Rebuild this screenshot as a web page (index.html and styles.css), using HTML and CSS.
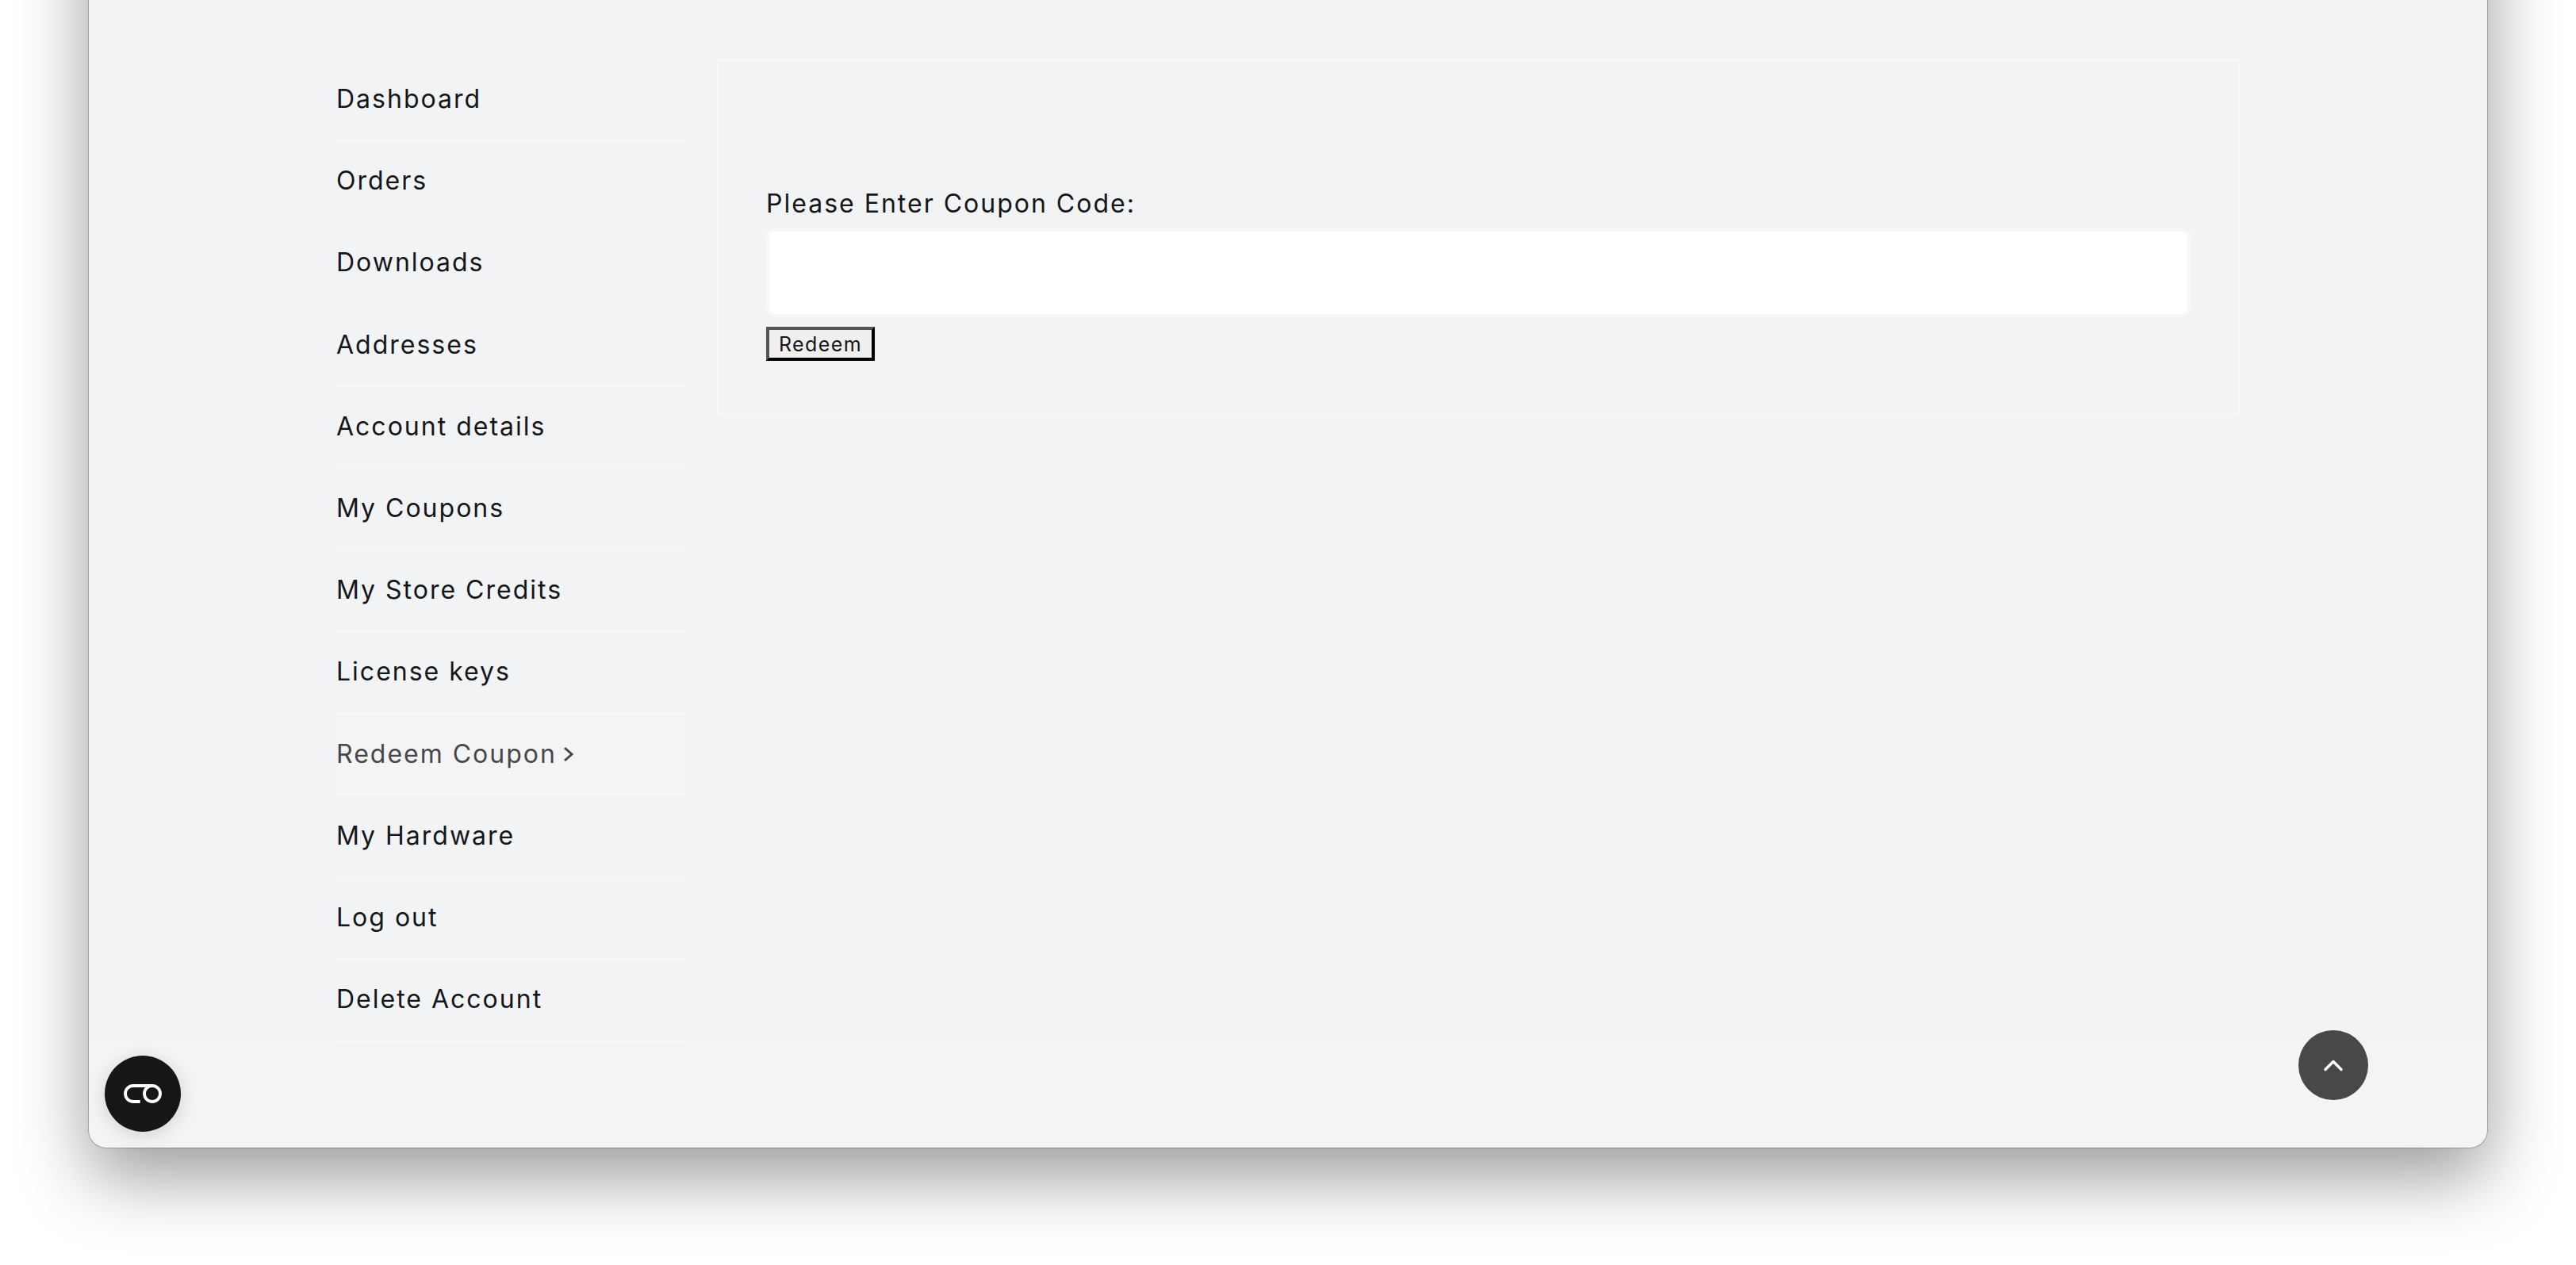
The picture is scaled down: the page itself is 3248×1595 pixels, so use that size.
FILE: index.html
```html
<!DOCTYPE html>
<html lang="en">
<head>
    <meta charset="UTF-8">
    <meta name="viewport" content="width=device-width, initial-scale=1.0">
    <title>Redeem Coupon</title>
    <link rel="stylesheet" href="styles.css">
</head>
<body>
    <div class="window">
        <div class="account">
            <ul class="account-nav">
                <li><a href="#">Dashboard</a></li>
                <li><a href="#">Orders</a></li>
                <li><a href="#">Downloads</a></li>
                <li><a href="#">Addresses</a></li>
                <li><a href="#">Account details</a></li>
                <li><a href="#">My Coupons</a></li>
                <li><a href="#">My Store Credits</a></li>
                <li><a href="#">License keys</a></li>
                <li class="active">
                    <a href="#">Redeem Coupon
                        <svg class="nav-arrow" viewBox="0 0 14 20" width="14" height="20"><path d="M2 2l9 8-9 8" fill="none" stroke="currentColor" stroke-width="3"/></svg>
                    </a>
                </li>
                <li><a href="#">My Hardware</a></li>
                <li><a href="#">Log out</a></li>
                <li><a href="#">Delete Account</a></li>
            </ul>
            <div class="account-content">
                <form class="coupon-form">
                    <label for="coupon">Please Enter Coupon Code:</label>
                    <input type="text" id="coupon" name="coupon">
                    <button type="submit" class="redeem-btn">Redeem</button>
                </form>
            </div>
        </div>

        <button type="button" class="consent-btn" aria-label="Cookie settings">
            <svg viewBox="0 0 96 96" width="96" height="96"><path d="M44.700 58H36a10 10 0 0 1 0-20h24" fill="none" stroke="#fff" stroke-width="3.800"/><circle cx="60" cy="48" r="10" fill="none" stroke="#fff" stroke-width="3.800"/></svg>
        </button>
        <button type="button" class="top-btn" aria-label="Back to top">
            <svg viewBox="0 0 88 88" width="88" height="88"><path d="M34 49.500l10-10 10 10" fill="none" stroke="#fff" stroke-width="3.500" stroke-linecap="round" stroke-linejoin="round"/></svg>
        </button>
    </div>
</body>
</html>
```

FILE: styles.css
```css
html, body {
    height: 100%;
}
body {
    margin: 0;
    height: 1595px;
    overflow: hidden;
    background-color: #ffffff;
    font-family: Inter, "Liberation Sans", sans-serif;
    color: #14161a;
}
.window {
    position: relative;
    box-sizing: border-box;
    width: 3024px;
    height: 1647px;
    margin: -200px 0 0 112px;
    background-color: #f4f4f5;
    border-radius: 22px;
    box-shadow: 0 0 0 1px rgba(0, 0, 0, 0.22), 0 36px 90px rgba(0, 0, 0, 0.4);
}
.account {
    box-sizing: border-box;
    height: 1513px;
    padding: 275px 0 0 312px;
    display: flex;
    gap: 40px;
    align-items: flex-start;
    background-color: #f2f3f5;
    border-radius: 22px 22px 0 0;
}
.account-nav {
    width: 440px;
    margin: 0;
    padding: 0;
    list-style: none;
}
.account-nav li {
    box-sizing: border-box;
    height: 103.2px;
    border-bottom: 2px solid #f7f7f8;
    display: flex;
    align-items: center;
}
.account-nav a {
    display: flex;
    align-items: center;
    gap: 8px;
    color: inherit;
    text-decoration: none;
    font-size: 32px;
    letter-spacing: 2px;
    margin-top: -2px;
}
.account-nav .active {
    background-color: #f4f4f5;
    color: #45474b;
}
.nav-arrow {
    margin-top: 2px;
}
.account-content {
    box-sizing: border-box;
    width: 1920px;
    padding: 60px;
    border: 2px solid #f7f7f8;
}
.coupon-form label {
    display: block;
    margin-top: 96px;
    margin-bottom: 7px;
    font-size: 32px;
    line-height: 48px;
    letter-spacing: 2px;
}
.coupon-form input {
    display: block;
    box-sizing: border-box;
    width: 100%;
    height: 112px;
    background-color: #ffffff;
    border: 4px solid #f7f7f8;
    border-radius: 10px;
}
.redeem-btn {
    display: block;
    box-sizing: border-box;
    width: 137px;
    height: 43px;
    margin: 12px 0 6px;
    padding: 0;
    background-color: #efefef;
    border: 4px solid;
    border-color: #555555 #000000 #000000 #555555;
    font-family: inherit;
    font-size: 25px;
    letter-spacing: 1.4px;
    color: #14161a;
}
.consent-btn, .top-btn {
    position: absolute;
    padding: 0;
    border: none;
    border-radius: 50%;
}
.consent-btn svg, .top-btn svg {
    display: block;
}
.consent-btn {
    left: 20px;
    bottom: 20px;
    width: 96px;
    height: 96px;
    background-color: #161616;
    box-shadow: 0 4px 24px rgba(0, 0, 0, 0.14);
}
.top-btn {
    right: 150px;
    bottom: 60px;
    width: 88px;
    height: 88px;
    background-color: #484848;
}
```
